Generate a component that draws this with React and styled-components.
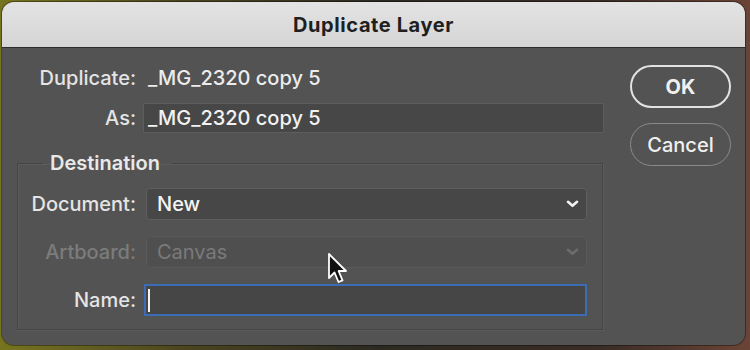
import React from 'react';
import styled, { createGlobalStyle } from 'styled-components';

const GlobalStyle = createGlobalStyle`
  html, body {
    margin: 0;
    padding: 0;
    width: 750px;
    height: 350px;
    overflow: hidden;
    background: linear-gradient(90deg, #77741f 0%, #4a4420 25%, #2c2a22 50%, #3a2c26 80%, #6a4436 100%);
    font-family: Inter, "Liberation Sans", sans-serif;
  }
  #root {
    padding: 2px 5px 5px 2px;
  }
`;

const Dialog = styled.div`
  width: 743px;
  height: 343px;
  border-radius: 12px;
  overflow: hidden;
  background: #535353;
  display: flex;
  flex-direction: column;
  position: relative;
  box-shadow: 0 0 0 1px rgba(0, 0, 0, 0.35);
`;

const TitleBar = styled.div`
  height: 45px;
  flex: none;
  display: flex;
  align-items: center;
  justify-content: center;
  background: linear-gradient(#e3e3e3, #d5d5d5);
  border-bottom: 1px solid #2c2c2c;
  color: #1f1f1f;
  font-size: 20px;
  letter-spacing: 0.6px;
  font-weight: 700;
`;

const Body = styled.div`
  flex: 1;
  display: flex;
  gap: 26px;
  padding: 15px 14px 15px 0;
`;

const Main = styled.div`
  flex: 1;
  display: flex;
  flex-direction: column;
`;

const TopGrid = styled.div`
  display: grid;
  grid-template-columns: 134px 1fr;
  column-gap: 7px;
  row-gap: 10px;
  align-items: center;
`;

const Label = styled.div`
  text-align: right;
  font-size: 20px;
  line-height: 30px;
  font-weight: 500;
  color: ${p => (p.$disabled ? '#7c7c7c' : '#e4e4e4')};
  white-space: nowrap;
`;

const Value = styled.div`
  font-size: 20px;
  line-height: 30px;
  font-weight: 500;
  color: #ececec;
  padding-left: 5px;
`;

const TextBox = styled.div`
  height: 30px;
  box-sizing: border-box;
  background: #474747;
  border: 1px solid #5d5d5d;
  border-radius: 1px;
  display: flex;
  align-items: center;
  padding-left: 4px;
  font-size: 20px;
  font-weight: 500;
  color: #f2f2f2;
`;

const Caret = styled.span`
  width: 2px;
  height: 23px;
  background: #f2f2f2;
`;

const Group = styled.fieldset`
  margin: 19px 1px 0 15px;
  padding: 14px 15px 13px 0;
  border: 1px solid #444444;
  box-shadow: 1px 1px 0 #5c5c5c, inset 1px 1px 0 #5c5c5c;
  min-width: 0;
`;

const Legend = styled.legend`
  margin-left: 24px;
  padding: 0 12px 0 8px;
  font-size: 20px;
  line-height: 22px;
  font-weight: 600;
  color: #e8e8e8;
`;

const GroupGrid = styled.div`
  display: grid;
  grid-template-columns: 118px 1fr;
  column-gap: 10px;
  row-gap: 16px;
  align-items: center;
`;

const Select = styled.div`
  height: 32px;
  box-sizing: border-box;
  border-radius: 4px;
  background: ${p => (p.$disabled ? '#4f4f4f' : '#474747')};
  border: 1px solid ${p => (p.$disabled ? '#5a5a5a' : '#5e5e5e')};
  display: flex;
  align-items: center;
  justify-content: space-between;
  padding: 0 7px 0 10px;
  font-size: 20px;
  font-weight: ${p => (p.$disabled ? 400 : 500)};
  color: ${p => (p.$disabled ? '#7a7a7a' : '#f4f4f4')};
`;

const Field = styled.div`
  height: 32px;
  box-sizing: border-box;
  background: #464646;
  border: 2px solid #3c6cb6;
  margin-left: -2px;
  display: flex;
  align-items: center;
  padding-left: 2px;
`;

const Buttons = styled.div`
  width: 101px;
  margin-top: 2px;
  display: flex;
  flex-direction: column;
  gap: 15px;
`;

const Button = styled.div`
  height: 43px;
  box-sizing: border-box;
  border-radius: 22px;
  border: ${p => (p.$primary ? '2px solid #e2e2e2' : '1.5px solid #8a8a8a')};
  display: flex;
  align-items: center;
  justify-content: center;
  font-size: 20px;
  font-weight: ${p => (p.$primary ? 700 : 500)};
  color: #f0f0f0;
`;

const Pointer = styled.svg`
  position: absolute;
  left: 325px;
  top: 250px;
`;

const Chevron = ({ color }) => (
  <svg width="13" height="8" viewBox="0 0 13 8">
    <polyline points="2,1.8 6.5,5.8 11,1.8" fill="none" stroke={color} strokeWidth="2.6" strokeLinecap="round" strokeLinejoin="round" />
  </svg>
);

export default function App() {
  return (
    <>
      <GlobalStyle />
      <Dialog>
        <TitleBar>Duplicate Layer</TitleBar>
        <Body>
          <Main>
            <TopGrid>
              <Label>Duplicate:</Label>
              <Value>_MG_2320 copy 5</Value>
              <Label>As:</Label>
              <TextBox>_MG_2320 copy 5</TextBox>
            </TopGrid>
            <Group>
              <Legend>Destination</Legend>
              <GroupGrid>
                <Label>Document:</Label>
                <Select>
                  New
                  <Chevron color="#f2f2f2" />
                </Select>
                <Label $disabled>Artboard:</Label>
                <Select $disabled>
                  Canvas
                  <Chevron color="#6c6c6c" />
                </Select>
                <Label>Name:</Label>
                <Field>
                  <Caret />
                </Field>
              </GroupGrid>
            </Group>
          </Main>
          <Buttons>
            <Button $primary>OK</Button>
            <Button>Cancel</Button>
          </Buttons>
        </Body>
        <Pointer width="22" height="34" viewBox="0 0 22 34">
          <path
            d="M2 2 L2 26 L7.5 20.5 L11.5 30 L15.5 28.3 L11.6 19 L19 19 Z"
            fill="#111"
            stroke="#fff"
            strokeWidth="1.8"
            strokeLinejoin="round"
          />
        </Pointer>
      </Dialog>
    </>
  );
}
